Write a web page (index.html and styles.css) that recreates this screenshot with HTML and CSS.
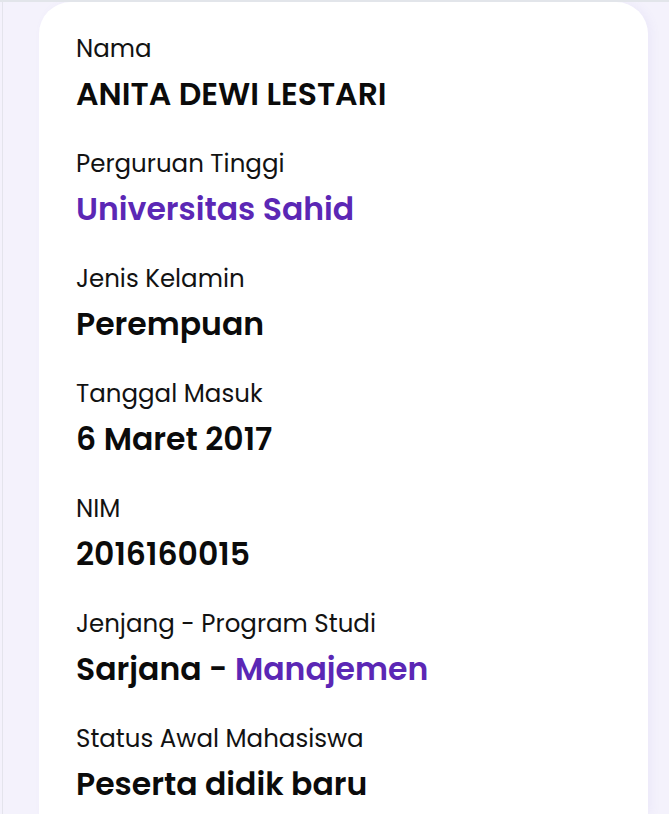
FILE: index.html
```html
<!DOCTYPE html>
<html lang="id">
<head>
  <meta charset="UTF-8" />
  <meta name="viewport" content="width=device-width, initial-scale=1.0" />
  <title>Data Mahasiswa</title>
  <link rel="stylesheet" href="styles.css">
</head>
<body>
  <div class="page">
    <div class="card">
      <div class="field">
        <div class="label">Nama</div>
        <div class="value">ANITA DEWI LESTARI</div>
      </div>
      <div class="field">
        <div class="label">Perguruan Tinggi</div>
        <div class="value accent">Universitas Sahid</div>
      </div>
      <div class="field">
        <div class="label">Jenis Kelamin</div>
        <div class="value">Perempuan</div>
      </div>
      <div class="field">
        <div class="label">Tanggal Masuk</div>
        <div class="value">6 Maret 2017</div>
      </div>
      <div class="field">
        <div class="label">NIM</div>
        <div class="value">2016160015</div>
      </div>
      <div class="field">
        <div class="label">Jenjang - Program Studi</div>
        <div class="value">Sarjana - <span class="accent">Manajemen</span></div>
      </div>
      <div class="field">
        <div class="label">Status Awal Mahasiswa</div>
        <div class="value">Peserta didik baru</div>
      </div>
    </div>
  </div>
</body>
</html>
```

FILE: styles.css
```css
* {
  box-sizing: border-box;
}

html, body {
  margin: 0;
  height: 100%;
  overflow: hidden;
}

body {
  background-color: #f4f2fc;
  border-top: 2px solid #e2e5ea;
  font-family: "Poppins", "Inter", "Noto Sans", sans-serif;
  color: #0b0b0b;
}

.page {
  height: 100%;
  margin-left: 2px;
  padding-left: 36px;
  border-left: 1px solid #e4e4ec;
}

.card {
  width: 609px;
  height: 100%;
  overflow: hidden;
  padding: 27px 0 0 37px;
  background-color: #ffffff;
  border-radius: 32px 32px 0 0;
  box-shadow: 4px 0 10px rgba(120, 100, 200, 0.06);
}

.field {
  margin-bottom: 25px;
}

.label {
  font-size: 24.5px;
  line-height: 40px;
  font-weight: 400;
  color: #121212;
}

.value {
  font-size: 31.5px;
  line-height: 50px;
  font-weight: 600;
}

.accent {
  color: #5b27b5;
}
```
